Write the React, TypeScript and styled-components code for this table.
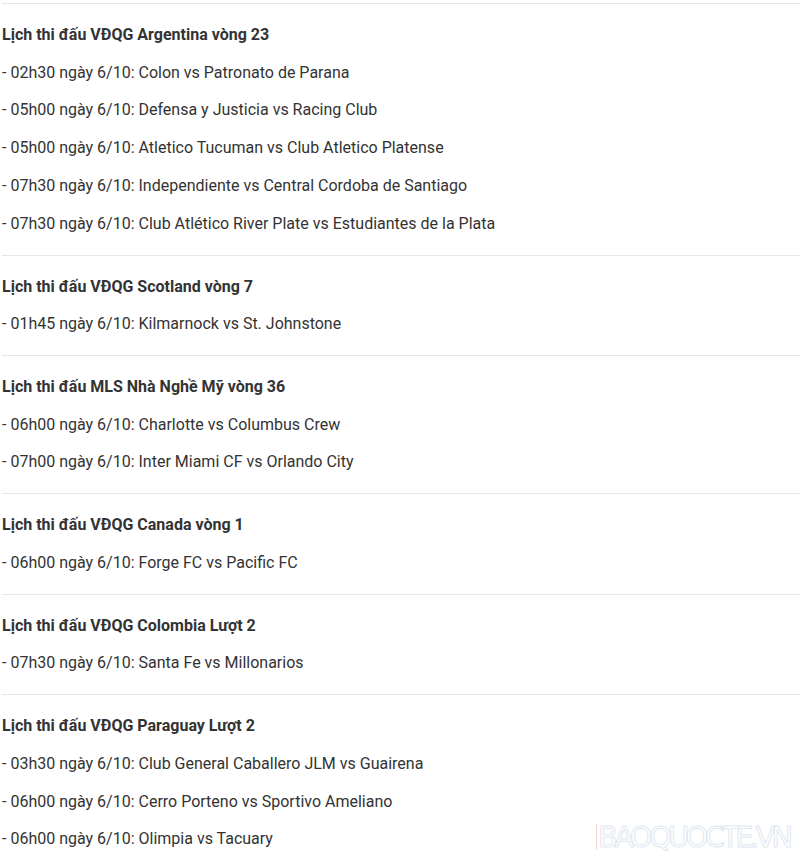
import React from 'react'
import styled, { createGlobalStyle } from 'styled-components'

const GlobalStyle = createGlobalStyle`
  body {
    margin: 0;
    background: #fff;
    font-family: Roboto, "Noto Sans", Arial, sans-serif;
    color: #333;
  }
`

const Wrapper = styled.div`
  position: relative;
  width: 800px;
  height: 859px;
  overflow: hidden;
  padding: 3px 0 0 2px;
  box-sizing: border-box;
`

const Section = styled.section`
  border-top: 1px solid #e6e6e6;
  padding: 18px 0 6.25px;
`

const Heading = styled.p`
  margin: 0 0 11.75px;
  font-size: 16px;
  font-weight: 700;
  line-height: 25.75px;
`

const Match = styled.p`
  margin: 0 0 12px;
  font-size: 16px;
  line-height: 25.75px;
`

const Watermark = styled.div`
  position: absolute;
  left: 596px;
  top: 824px;
  font-family: "DejaVu Sans", sans-serif;
  font-size: 29px;
  letter-spacing: -3.7px;
  color: transparent;
  -webkit-text-stroke: 1px #dfe7f2;
  border-left: 1px solid #f0d6d8;
  padding-left: 1px;
  line-height: 26px;
  white-space: nowrap;
`

const schedule = [
  {
    title: 'Lịch thi đấu VĐQG Argentina vòng 23',
    matches: [
      '- 02h30 ngày 6/10: Colon vs Patronato de Parana',
      '- 05h00 ngày 6/10: Defensa y Justicia vs Racing Club',
      '- 05h00 ngày 6/10: Atletico Tucuman vs Club Atletico Platense',
      '- 07h30 ngày 6/10: Independiente vs Central Cordoba de Santiago',
      '- 07h30 ngày 6/10: Club Atlético River Plate vs Estudiantes de la Plata',
    ],
  },
  {
    title: 'Lịch thi đấu VĐQG Scotland vòng 7',
    matches: ['- 01h45 ngày 6/10: Kilmarnock vs St. Johnstone'],
  },
  {
    title: 'Lịch thi đấu MLS Nhà Nghề Mỹ vòng 36',
    matches: [
      '- 06h00 ngày 6/10: Charlotte vs Columbus Crew',
      '- 07h00 ngày 6/10: Inter Miami CF vs Orlando City',
    ],
  },
  {
    title: 'Lịch thi đấu VĐQG Canada vòng 1',
    matches: ['- 06h00 ngày 6/10: Forge FC vs Pacific FC'],
  },
  {
    title: 'Lịch thi đấu VĐQG Colombia Lượt 2',
    matches: ['- 07h30 ngày 6/10: Santa Fe vs Millonarios'],
  },
  {
    title: 'Lịch thi đấu VĐQG Paraguay Lượt 2',
    matches: [
      '- 03h30 ngày 6/10: Club General Caballero JLM vs Guairena',
      '- 06h00 ngày 6/10: Cerro Porteno vs Sportivo Ameliano',
      '- 06h00 ngày 6/10: Olimpia vs Tacuary',
    ],
  },
]

const App = () => {
  return (
    <Wrapper>
      <GlobalStyle />
      {schedule.map((s) => (
        <Section key={s.title}>
          <Heading>{s.title}</Heading>
          {s.matches.map((m) => (
            <Match key={m}>{m}</Match>
          ))}
        </Section>
      ))}
      <Watermark>BAOQUOCTE.VN</Watermark>
    </Wrapper>
  )
}

export default App
